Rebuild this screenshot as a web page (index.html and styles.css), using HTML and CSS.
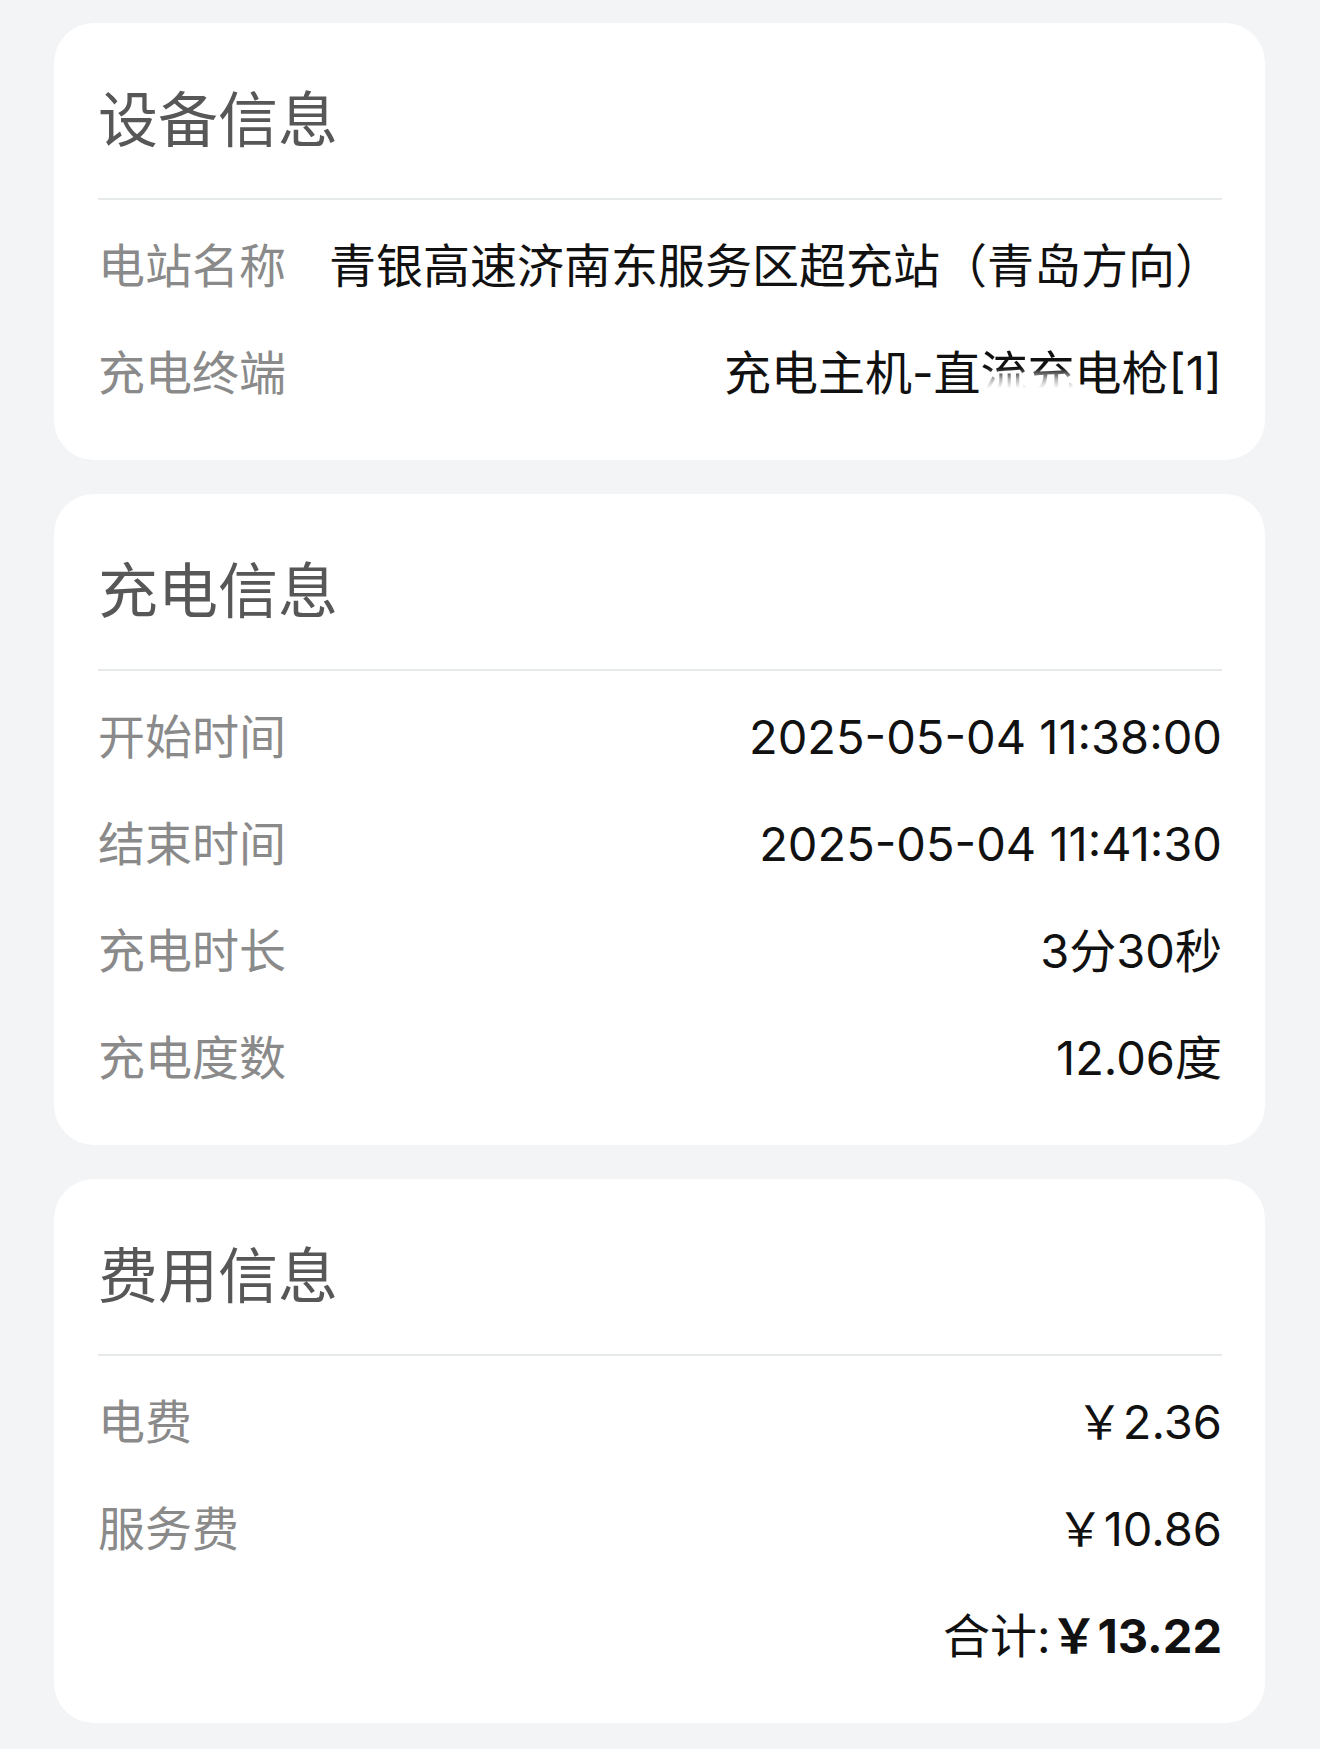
FILE: index.html
```html
<!DOCTYPE html>
<html>
<head>
    <meta charset="utf-8">
    <title>订单详情</title>
    <link rel="stylesheet" href="styles.css">
</head>
<body>
    <div class="page">
        <!-- 设备信息 -->
        <section class="card">
            <h2 class="card-title">设备信息</h2>
            <div class="rows">
                <div class="row">
                    <span class="label">电站名称</span>
                    <span class="value">青银高速济南东服务区超充站（青岛方向）</span>
                </div>
                <div class="row">
                    <span class="label">充电终端</span>
                    <span class="value">充电主机-直<span class="faded">流充</span>电枪[1]</span>
                </div>
            </div>
        </section>

        <!-- 充电信息 -->
        <section class="card">
            <h2 class="card-title">充电信息</h2>
            <div class="rows">
                <div class="row">
                    <span class="label">开始时间</span>
                    <span class="value">2025-05-04 11:38:00</span>
                </div>
                <div class="row">
                    <span class="label">结束时间</span>
                    <span class="value">2025-05-04 11:41:30</span>
                </div>
                <div class="row">
                    <span class="label">充电时长</span>
                    <span class="value">3分30秒</span>
                </div>
                <div class="row">
                    <span class="label">充电度数</span>
                    <span class="value">12.06度</span>
                </div>
            </div>
        </section>

        <!-- 费用信息 -->
        <section class="card">
            <h2 class="card-title">费用信息</h2>
            <div class="rows">
                <div class="row">
                    <span class="label">电费</span>
                    <span class="value">￥2.36</span>
                </div>
                <div class="row">
                    <span class="label">服务费</span>
                    <span class="value">￥10.86</span>
                </div>
                <div class="row total">
                    <span class="value">合计:<strong class="amount">￥13.22</strong></span>
                </div>
            </div>
        </section>
    </div>
</body>
</html>
```

FILE: styles.css
```css
body {
    margin: 0;
    background-color: #f3f4f6;
    font-family: "Inter", "Noto Sans CJK SC", sans-serif;
}

.page {
    display: flex;
    flex-direction: column;
    gap: 34px;
    padding: 23px 55px 26px 54px;
}

/* white rounded blocks */
.card {
    background-color: #fff;
    border-radius: 40px;
    padding: 0 43px 34px 44px;
}

.card-title {
    margin: 0;
    padding: 57px 0 38px;
    font-size: 60px;
    font-weight: 400;
    line-height: 80px;
    color: #575757;
    border-bottom: 2px solid #e6ebea;
}

.rows {
    padding-top: 12px;
}

.row {
    display: flex;
    justify-content: space-between;
    align-items: center;
    height: 107px;
    font-size: 47px;
    line-height: 107px;
}

.label {
    flex-shrink: 0;
    color: #8a8a8a;
}

.value {
    white-space: nowrap;
    text-align: right;
    color: #111;
}

/* partly wiped characters in the terminal name */
.faded {
    -webkit-mask-image: linear-gradient(to bottom, #000 42%, rgba(0, 0, 0, 0.3) 62%, transparent 78%);
    mask-image: linear-gradient(to bottom, #000 42%, rgba(0, 0, 0, 0.3) 62%, transparent 78%);
}

.total {
    justify-content: flex-end;
}

.amount {
    font-weight: 700;
}
```
